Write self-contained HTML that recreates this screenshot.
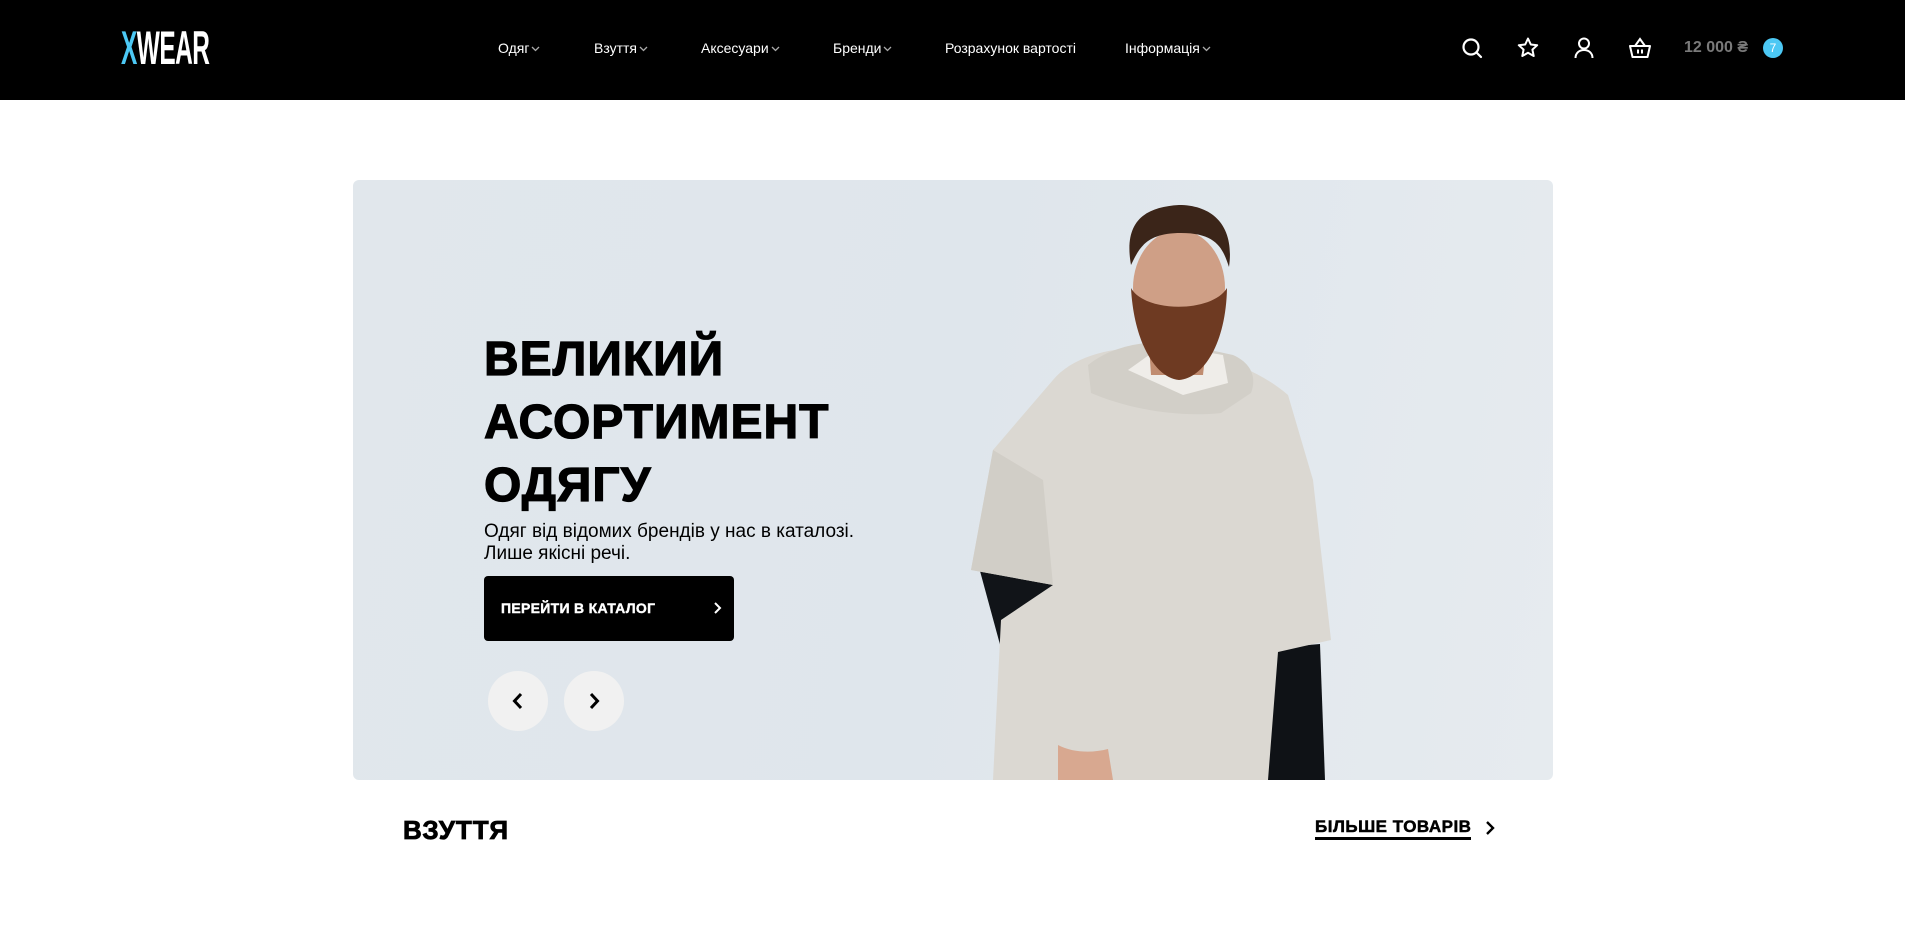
<!DOCTYPE html>
<html><head><meta charset="utf-8"><style>
*{margin:0;padding:0;box-sizing:border-box}
body{width:1905px;height:929px;background:#fff;font-family:"Liberation Sans",Arial,sans-serif;position:relative;overflow:hidden}
.hdr{position:absolute;left:0;top:0;width:1905px;height:100px;background:#000}
.logo{position:absolute;left:121px;top:23px;font-size:47px;font-weight:bold;color:#fff;transform:scaleX(0.52);transform-origin:left top;letter-spacing:-1px;line-height:50px}
.logo span{color:#4cc8f4}
.nav{position:absolute;top:39px;color:#fff;font-size:14px;line-height:18px;white-space:nowrap}
.nav svg{vertical-align:middle;margin-left:2px}
.ic{position:absolute;top:36px}
.price{position:absolute;left:1684px;top:39px;color:#7a7a7a;font-weight:bold;font-size:16px}
.badge{position:absolute;left:1763px;top:38px;width:20px;height:20px;border-radius:50%;background:#4cc8f4;color:#fff;font-size:12px;text-align:center;line-height:20px}
.banner{position:absolute;left:353px;top:180px;width:1200px;height:600px;border-radius:6px;overflow:hidden;background:linear-gradient(100deg,#e1e7ec,#dfe6ec 50%,#e6ebef)}
h1{position:absolute;left:484px;top:328px;font-size:48px;line-height:63px;font-weight:900;color:#000;letter-spacing:1px;-webkit-text-stroke:1.2px #000}
.sub{position:absolute;left:484px;top:521px;font-size:19px;line-height:22px;color:#000}
.btn{position:absolute;left:484px;top:576px;width:250px;height:65px;background:#000;border-radius:4px;color:#fff;font-weight:bold;font-size:14px;letter-spacing:.3px}
.btn span{position:absolute;left:17px;top:24px;-webkit-text-stroke:.4px #fff}
.btn svg{position:absolute;right:10px;top:25px}
.circ{position:absolute;top:671px;width:60px;height:60px;border-radius:50%;background:#f1f1f1}
.circ svg{position:absolute;left:20px;top:20px}
.h2{position:absolute;left:403px;top:815px;font-size:26px;font-weight:900;letter-spacing:1px;-webkit-text-stroke:.8px #000}
.more{position:absolute;left:1315px;top:818px;font-size:17px;font-weight:900;letter-spacing:.5px;border-bottom:3px solid #000;line-height:18px;padding-bottom:1px;-webkit-text-stroke:.5px #000}
</style></head><body>
<div class="hdr">
<div class="logo"><span>X</span>WEAR</div>
<div class="nav" style="left:498px">Одяг<svg width="9" height="6" viewBox="0 0 9 6"><path d="M1 1l3.5 3.5L8 1" stroke="#aaa" fill="none" stroke-width="1.3"/></svg></div>
<div class="nav" style="left:594px">Взуття<svg width="9" height="6" viewBox="0 0 9 6"><path d="M1 1l3.5 3.5L8 1" stroke="#aaa" fill="none" stroke-width="1.3"/></svg></div>
<div class="nav" style="left:701px">Аксесуари<svg width="9" height="6" viewBox="0 0 9 6"><path d="M1 1l3.5 3.5L8 1" stroke="#aaa" fill="none" stroke-width="1.3"/></svg></div>
<div class="nav" style="left:833px">Бренди<svg width="9" height="6" viewBox="0 0 9 6"><path d="M1 1l3.5 3.5L8 1" stroke="#aaa" fill="none" stroke-width="1.3"/></svg></div>
<div class="nav" style="left:945px">Розрахунок вартості</div>
<div class="nav" style="left:1125px">Інформація<svg width="9" height="6" viewBox="0 0 9 6"><path d="M1 1l3.5 3.5L8 1" stroke="#aaa" fill="none" stroke-width="1.3"/></svg></div>
<svg class="ic" style="left:1460px" width="24" height="24" viewBox="0 0 24 24"><circle cx="11" cy="11" r="7.5" stroke="#fff" stroke-width="2.2" fill="none"/><path d="M16.5 16.5L21 21" stroke="#fff" stroke-width="2.2" stroke-linecap="round"/></svg>
<svg class="ic" style="left:1516px" width="24" height="24" viewBox="0 0 24 24"><path d="M12 2.5l2.8 6 6.4.7-4.8 4.4 1.3 6.4L12 16.8l-5.7 3.2 1.3-6.4-4.8-4.4 6.4-.7z" stroke="#fff" stroke-width="2" fill="none" stroke-linejoin="round"/></svg>
<svg class="ic" style="left:1572px" width="24" height="24" viewBox="0 0 24 24"><circle cx="12" cy="7.5" r="5" stroke="#fff" stroke-width="2" fill="none"/><path d="M3.5 22c0-5 3.8-8 8.5-8s8.5 3 8.5 8" stroke="#fff" stroke-width="2" fill="none"/></svg>
<svg class="ic" style="left:1628px" width="24" height="24" viewBox="0 0 24 24"><path d="M2 10h20l-2.5 11h-15z" stroke="#fff" stroke-width="2" fill="none" stroke-linejoin="round"/><path d="M7 10l5-7 5 7M10 13.5v4M14 13.5v4" stroke="#fff" stroke-width="2" fill="none"/></svg>
<div class="price">12 000 ₴</div>
<div class="badge">7</div>
</div>
<div class="banner">
<svg width="1200" height="600" viewBox="0 0 1200 600">
<path d="M627 391L714 391L728 589L680 586z" fill="#111418"/>
<path d="M897 470L967 464L972 600L915 600z" fill="#0f1216"/>
<path d="M700 200C720 176 760 166 800 168C850 170 900 185 935 215L960 300L978 460L925 472L915 600L640 600L648 440L700 405L618 390L640 270z" fill="#dbd8d2"/>
<path d="M640 270L618 390L700 405L690 300z" fill="#d1cec7"/>
<path d="M735 185c25-20 60-25 90-22l55 12c18 8 24 22 18 38l-30 20c-45 5-95-5-130-20z" fill="#d2cfc8"/>
<path d="M775 190l55 25 45-12-5-28-60-10z" fill="#efede9"/>
<path d="M795 150h60l-5 45h-52z" fill="#c08c70"/>
<ellipse cx="826" cy="108" rx="46" ry="58" fill="#cf9f86"/>
<path d="M778 108c3 55 25 90 48 92 25-2 47-37 48-92-15 25-82 25-96 0z" fill="#6e3a22"/>
<path d="M778 85c-8-45 15-58 48-60 33 0 56 20 50 62-6-18-12-34-48-34s-42 16-50 32z" fill="#3b2519"/>
<path d="M705 565c15 8 35 8 50 4l5 31h-55z" fill="#d8a890"/>
</svg>
</div>
<h1>ВЕЛИКИЙ<br>АСОРТИМЕНТ<br>ОДЯГУ</h1>
<div class="sub">Одяг від відомих брендів у нас в каталозі.<br>Лише якісні речі.</div>
<div class="btn"><span>ПЕРЕЙТИ В КАТАЛОГ</span><svg width="12" height="14" viewBox="0 0 12 14"><path d="M3 2l5 5-5 5" stroke="#fff" stroke-width="2" fill="none"/></svg></div>
<div class="circ" style="left:488px"><svg width="20" height="20" viewBox="0 0 20 20"><path d="M13 3l-6.5 7 6.5 7" stroke="#000" stroke-width="3" fill="none"/></svg></div>
<div class="circ" style="left:564px"><svg width="20" height="20" viewBox="0 0 20 20"><path d="M7 3l6.5 7-6.5 7" stroke="#000" stroke-width="3" fill="none"/></svg></div>
<div class="h2">ВЗУТТЯ</div>
<div class="more">БІЛЬШЕ ТОВАРІВ</div>
<svg style="position:absolute;left:1484px;top:820px" width="12" height="16" viewBox="0 0 12 16"><path d="M3 2l6 6-6 6" stroke="#000" stroke-width="2.4" fill="none"/></svg>
</body></html>
